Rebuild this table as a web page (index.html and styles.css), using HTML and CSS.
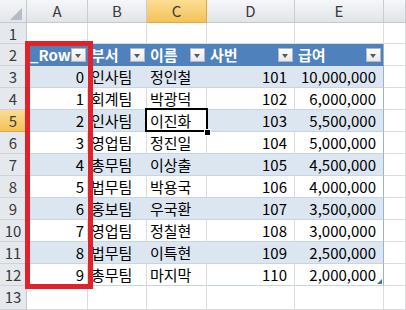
FILE: index.html
```html
<!DOCTYPE html>
<html lang="ko">
<head>
<meta charset="utf-8">
<link rel="stylesheet" href="styles.css">
</head>
<body>
<div class="sheet">
  <div class="corner"><svg width="27" height="23" viewBox="0 0 27 23"><polygon points="10,20 22,20 22,8" fill="#b7bcc4"/></svg></div>
  <div class="ch">A</div><div class="ch">B</div><div class="ch sel">C</div><div class="ch">D</div><div class="ch">E</div><div class="ch"></div>

  <div class="rh">1</div><div class="c"></div><div class="c"></div><div class="c"></div><div class="c"></div><div class="c"></div><div class="c"></div>

  <div class="rh">2</div>
  <div class="th"><span>_Row</span><i class="fb"></i></div>
  <div class="th"><span>부서</span><i class="fb"></i></div>
  <div class="th"><span>이름</span><i class="fb"></i></div>
  <div class="th"><span>사번</span><i class="fb"></i></div>
  <div class="th e"><span>급여</span><i class="fb"></i></div>
  <div class="c"></div>

  <div class="rh">3</div><div class="td band num">0</div><div class="td band">인사팀</div><div class="td band">정인철</div><div class="td band num wide">101</div><div class="td band num wide e">10,000,000</div><div class="c"></div>
  <div class="rh">4</div><div class="td num">1</div><div class="td">회계팀</div><div class="td">박광덕</div><div class="td num wide">102</div><div class="td num wide e">6,000,000</div><div class="c"></div>
  <div class="rh sel">5</div><div class="td band num">2</div><div class="td band">인사팀</div><div class="td cur">이진화</div><div class="td band num wide">103</div><div class="td band num wide e">5,500,000</div><div class="c"></div>
  <div class="rh">6</div><div class="td num">3</div><div class="td">영업팀</div><div class="td">정진일</div><div class="td num wide">104</div><div class="td num wide e">5,000,000</div><div class="c"></div>
  <div class="rh">7</div><div class="td band num">4</div><div class="td band">총무팀</div><div class="td band">이상출</div><div class="td band num wide">105</div><div class="td band num wide e">4,500,000</div><div class="c"></div>
  <div class="rh">8</div><div class="td num">5</div><div class="td">법무팀</div><div class="td">박용국</div><div class="td num wide">106</div><div class="td num wide e">4,000,000</div><div class="c"></div>
  <div class="rh">9</div><div class="td band num">6</div><div class="td band">홍보팀</div><div class="td band">우국환</div><div class="td band num wide">107</div><div class="td band num wide e">3,500,000</div><div class="c"></div>
  <div class="rh">10</div><div class="td num">7</div><div class="td">영업팀</div><div class="td">정칠현</div><div class="td num wide">108</div><div class="td num wide e">3,000,000</div><div class="c"></div>
  <div class="rh">11</div><div class="td band num">8</div><div class="td band">법무팀</div><div class="td band">이특현</div><div class="td band num wide">109</div><div class="td band num wide e">2,500,000</div><div class="c"></div>
  <div class="rh">12</div><div class="td num">9</div><div class="td">총무팀</div><div class="td">마지막</div><div class="td num wide">110</div><div class="td num wide e end">2,000,000</div><div class="c"></div>

  <div class="rh">13</div><div class="c"></div><div class="c"></div><div class="c"></div><div class="c"></div><div class="c"></div><div class="c"></div>

  <div class="note"></div>
</div>
</body>
</html>
```

FILE: styles.css
```css
html, body {
  margin: 0;
  padding: 0;
  background: #ffffff;
}

body {
  font-family: "Noto Sans CJK KR", "Noto Sans", sans-serif;
  font-size: 15px;
  color: #000000;
}

.sheet {
  position: relative;
  width: 406px;
  height: 310px;
  overflow: hidden;
  display: grid;
  grid-template-columns: 27px 61px 59px 60px 88px 89px 22px;
  grid-template-rows: 23px 21px 22px repeat(10, 22px) 24px;
}

.sheet > div {
  box-sizing: border-box;
  min-width: 0;
}

.corner {
  background: linear-gradient(#f4f6f8, #e3e6ea);
  border-right: 1px solid #c5c9cf;
  border-bottom: 1px solid #c5c9cf;
}

.corner svg {
  display: block;
}

.ch {
  background: linear-gradient(#f5f7f9, #e1e4e8);
  border-right: 1px solid #c9cdd3;
  border-bottom: 1px solid #c5c9cf;
  color: #3a3a3a;
  text-align: center;
  line-height: 22px;
}

.rh {
  background: #e5e8ec;
  border-right: 1px solid #c5c9cf;
  border-bottom: 1px solid #cfd3d8;
  color: #3a3a3a;
  text-align: center;
  line-height: 21px;
}

.ch.sel,
.rh.sel {
  background: linear-gradient(#fbdd94, #f4c258);
  border-right-color: #e1a93f;
  border-bottom-color: #e1a93f;
}

.c {
  border-right: 1px solid #dadcdd;
  border-bottom: 1px solid #dadcdd;
}

.th {
  background: #4f81bd;
  color: #ffffff;
  font-weight: bold;
  display: flex;
  align-items: center;
  padding: 0 2px 0 3px;
  border-bottom: 1px solid #4f81bd;
}

.th span {
  flex: 1;
  min-width: 0;
  overflow: hidden;
  white-space: nowrap;
  line-height: 21px;
}

.fb {
  flex: none;
  position: relative;
  width: 15px;
  height: 14px;
  box-sizing: border-box;
  background: linear-gradient(#ffffff, #e6e8eb);
  border: 1px solid #b4b8be;
}

.fb::after {
  content: "";
  position: absolute;
  left: 3px;
  top: 5px;
  border-left: 3.5px solid transparent;
  border-right: 3.5px solid transparent;
  border-top: 4px solid #5a5a5a;
}

.td {
  padding: 0 3px;
  line-height: 21px;
  white-space: nowrap;
  overflow: hidden;
  border-right: 1px solid #dadcdd;
  border-bottom: 1px solid #c6d4e5;
}

.td.band {
  background: #dce6f1;
  border-right-color: #dce6f1;
}

.td.num {
  text-align: right;
}

.td.num.wide {
  padding-right: 7px;
}

.th.e,
.td.e {
  border-right: 1px solid #95b3d7;
}

.td.cur {
  position: relative;
  z-index: 2;
  overflow: visible;
  background: #ffffff;
}

.td.cur::after {
  content: "";
  position: absolute;
  left: -2px;
  top: -2px;
  right: -2px;
  bottom: -1px;
  border: 2px solid #000000;
}

.td.cur::before {
  content: "";
  position: absolute;
  right: -4px;
  bottom: -4px;
  width: 5px;
  height: 5px;
  background: #000000;
  outline: 1px solid #ffffff;
  z-index: 3;
}

.td.end {
  position: relative;
}

.td.end::after {
  content: "";
  position: absolute;
  right: 1px;
  bottom: 1px;
  border-left: 5px solid transparent;
  border-bottom: 5px solid #4a6ea8;
}

.note {
  position: absolute;
  left: 25px;
  top: 41px;
  width: 68px;
  height: 248px;
  border: 5px solid #e2222b;
  z-index: 5;
  pointer-events: none;
}
```
